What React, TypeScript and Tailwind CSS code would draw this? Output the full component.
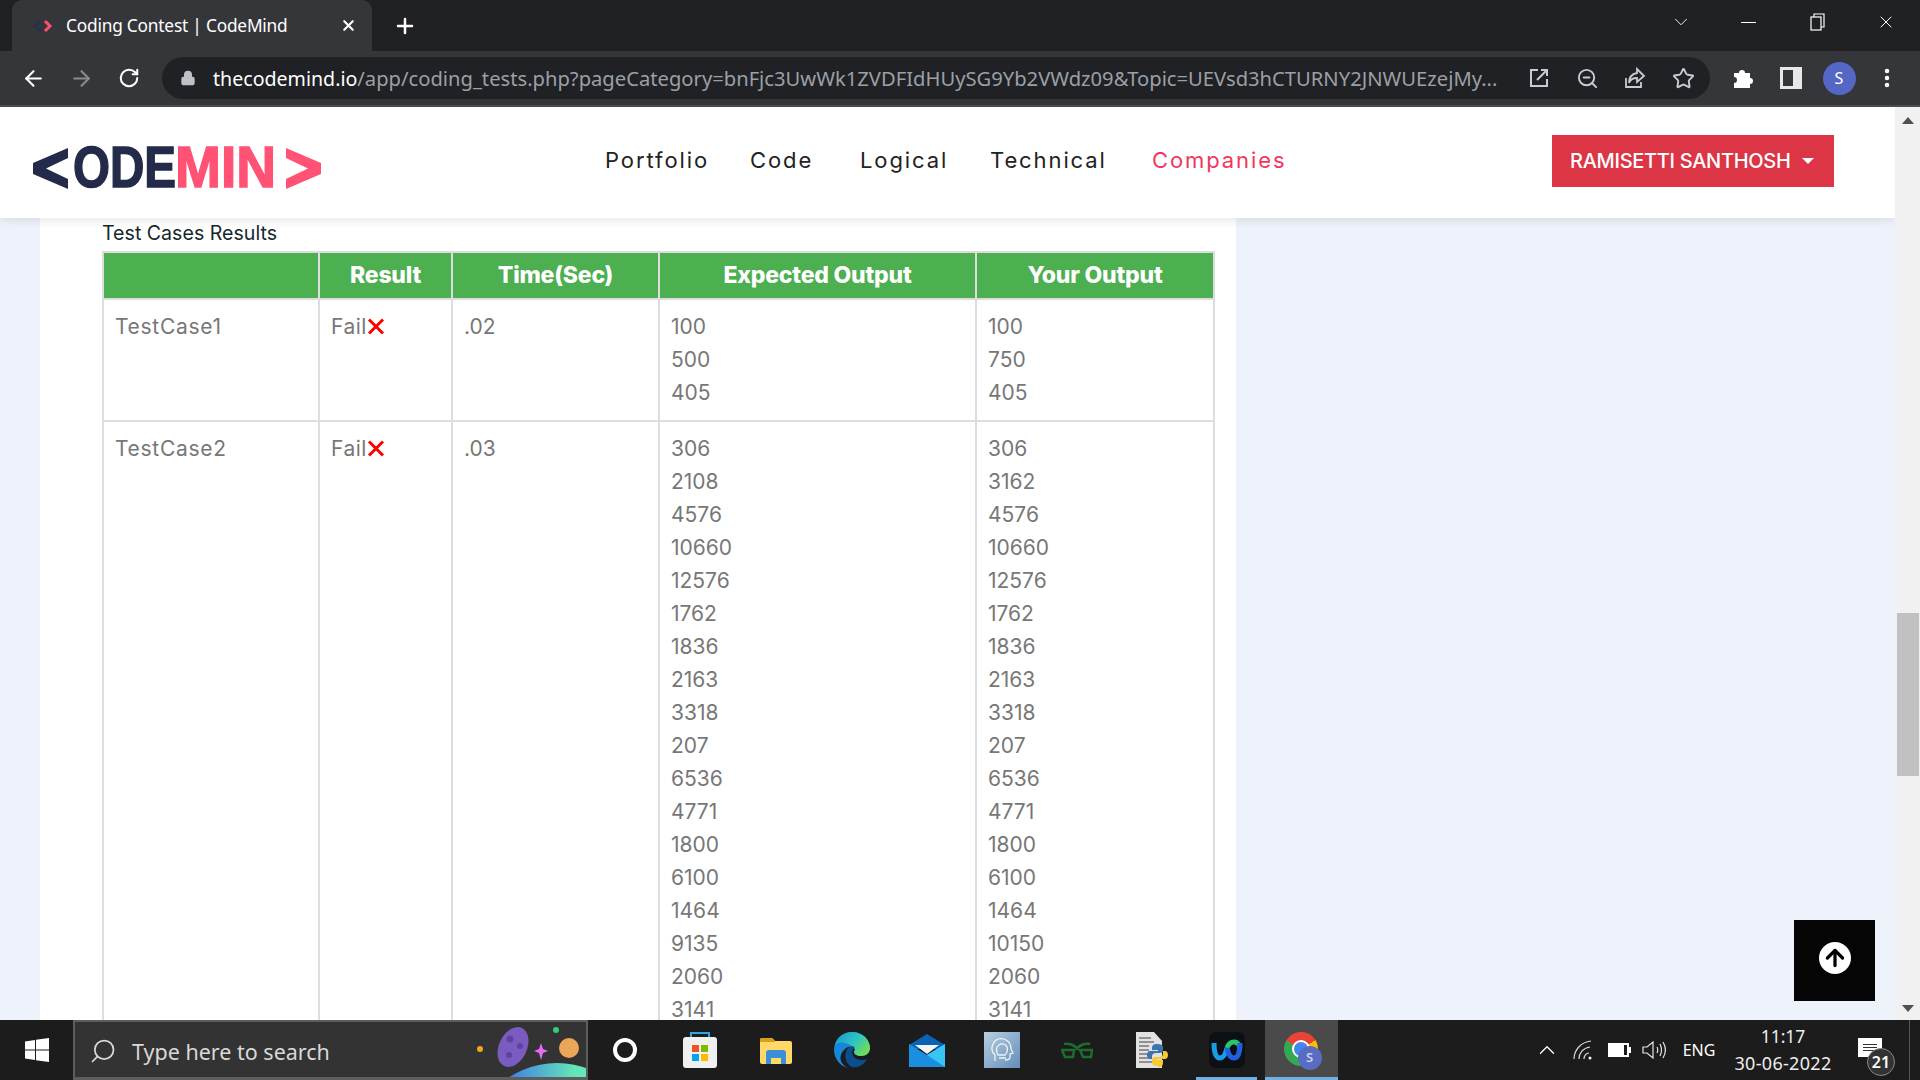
import {
  ArrowLeft,
  ArrowRight,
  ArrowUp,
  ChevronDown,
  ChevronUp,
  Lock,
  MoreVertical,
  Plus,
  RotateCw,
  Search,
  Star,
  X,
  ZoomOut,
} from "lucide-react";

const expected2 = ["306", "2108", "4576", "10660", "12576", "1762", "1836", "2163", "3318", "207", "6536", "4771", "1800", "6100", "1464", "9135", "2060", "3141"];
const actual2 = ["306", "3162", "4576", "10660", "12576", "1762", "1836", "2163", "3318", "207", "6536", "4771", "1800", "6100", "1464", "10150", "2060", "3141"];

const rows = [
  { name: "TestCase1", time: ".02", expected: ["100", "500", "405"], actual: ["100", "750", "405"] },
  { name: "TestCase2", time: ".03", expected: expected2, actual: actual2 },
];

function TabBar() {
  return (
    <div className="flex h-[51px] items-end bg-[#202124] pl-[12px] font-['Noto_Sans',sans-serif] text-white">
      <div className="flex h-[51px] w-[360px] items-center rounded-t-[10px] bg-[#35363a] pl-[20px]">
        <svg width="22" height="14" viewBox="0 0 22 14" className="shrink-0">
          <path d="M8 2 3 7l5 5" fill="none" stroke="#26304f" strokeWidth="3" />
          <path d="M13 2l5 5-5 5" fill="none" stroke="#ff4f70" strokeWidth="3" />
        </svg>
        <span className="ml-[12px] w-[274px] text-[17.3px] tracking-[-0.2px]">Coding Contest | CodeMind</span>
        <X size={17} strokeWidth={3} />
      </div>
      <div className="flex h-[51px] w-[66px] items-center justify-center">
        <Plus size={24} strokeWidth={2.5} />
      </div>
      <div className="ml-auto flex h-[44px] items-center self-start">
        <div className="flex w-[67px] justify-center"><ChevronDown size={22} strokeWidth={1} /></div>
        <div className="flex w-[69px] justify-center"><div className="h-px w-[15px] bg-white" /></div>
        <div className="flex w-[69px] justify-center">
          <svg width="16" height="18" viewBox="0 0 16 18" fill="none" stroke="white" strokeWidth="1.2">
            <rect x="1" y="4" width="10" height="13" />
            <path d="M4 4V1h10v13h-3" />
          </svg>
        </div>
        <div className="flex w-[68px] justify-center"><X size={20} strokeWidth={1.2} /></div>
      </div>
    </div>
  );
}

function ToolbarIcon({ children }: { children: React.ReactNode }) {
  return <div className="flex h-[42px] w-[48px] shrink-0 items-center justify-center">{children}</div>;
}

function Toolbar() {
  return (
    <div className="flex h-[56px] shrink-0 items-start border-b-2 border-[#4b4c4f] bg-[#35363a] pl-[9px] pt-[6px] font-['Noto_Sans',sans-serif] text-white">
      <div className="flex h-[42px] items-center">
        <ToolbarIcon><ArrowLeft size={25} strokeWidth={2} /></ToolbarIcon>
        <ToolbarIcon><ArrowRight size={25} strokeWidth={2} className="text-[#8b8c8f]" /></ToolbarIcon>
        <ToolbarIcon><RotateCw size={22} strokeWidth={2.2} /></ToolbarIcon>
      </div>
      <div className="ml-[9px] flex h-[42px] w-[1548px] items-center rounded-full bg-[#202124] pl-[18px] pr-[3px]">
        <Lock size={16} fill="#bdc1c6" className="shrink-0 text-[#bdc1c6]" />
        <div className="ml-[17px] w-[1284px] whitespace-nowrap text-[19.6px]">
          thecodemind.io
          <span className="text-[20.2px] text-[#9aa0a6]">/app/coding_tests.php?pageCategory=bnFjc3UwWk1ZVDFIdHUySG9Yb2VWdz09&amp;Topic=UEVsd3hCTURNY2JNWUEzejMy...</span>
        </div>
        <div className="ml-auto flex text-[#c8cbcf]">
          <ToolbarIcon>
            <svg width="20" height="20" viewBox="0 0 20 20" fill="none" stroke="currentColor" strokeWidth="2">
              <path d="M9 2H2v16h16v-7M12 2h6v6M18 2 8 12" />
            </svg>
          </ToolbarIcon>
          <ToolbarIcon><ZoomOut size={23} strokeWidth={2} /></ToolbarIcon>
          <ToolbarIcon>
            <svg width="22" height="22" viewBox="0 0 22 22" fill="none" stroke="currentColor" strokeWidth="1.8">
              <path d="M2 11v9h15v-5" />
              <path d="M13 2l7 7-7 6v-4c-4 0-7 2-8 5 0-6 3-9 8-10z" />
            </svg>
          </ToolbarIcon>
          <ToolbarIcon><Star size={23} strokeWidth={2} /></ToolbarIcon>
        </div>
      </div>
      <div className="ml-[9px] flex h-[42px] items-center">
        <ToolbarIcon>
          <svg width="24" height="24" viewBox="0 0 24 24" fill="white">
            <path d="M3 7h5a3 3 0 1 1 6 0h5v5a3 3 0 1 1 0 6v4H3v-5a3 3 0 1 0 0-6z" />
          </svg>
        </ToolbarIcon>
        <ToolbarIcon>
          <div className="flex h-[22px] w-[22px] justify-start border-[3px] border-[#e8e8e8] bg-[#e8e8e8]">
            <div className="h-full w-[10px] bg-[#35363a]" />
          </div>
        </ToolbarIcon>
        <ToolbarIcon>
          <div className="flex h-[33px] w-[33px] items-center justify-center rounded-full bg-[#5567c4] text-[16px]">S</div>
        </ToolbarIcon>
        <ToolbarIcon><MoreVertical size={24} strokeWidth={2.5} /></ToolbarIcon>
      </div>
    </div>
  );
}

function Logo() {
  return (
    <div className="mt-[12px] flex h-[42px] w-[288px] items-center font-['Liberation_Sans',sans-serif] text-[58px] font-bold leading-[42px]">
      <svg width="35" height="41" viewBox="0 0 35 41" className="shrink-0">
        <path d="M35 0v10L13 20.500 35 31v10L0 26V15z" fill="#232a4a" />
      </svg>
      <div className="ml-[5px] w-[102px] text-[#232a4a] [-webkit-text-stroke:1.5px_#232a4a]">
        <span className="inline-block origin-left -translate-y-[2px] scale-x-[0.82]">ODE</span>
      </div>
      <div className="w-[102px] text-[#ff5274] [-webkit-text-stroke:1.5px_#ff5274]">
        <span className="inline-block origin-left -translate-y-[2px] scale-x-[0.95]">MIN</span>
      </div>
      <svg width="35" height="41" viewBox="0 0 35 41" className="ml-[9px] shrink-0">
        <path d="M0 0v10l22 10.500L0 31v10l35-15V15z" fill="#ff5274" />
      </svg>
    </div>
  );
}

function SiteHeader() {
  const links = [
    { label: "Portfolio", w: "w-[145px]" },
    { label: "Code", w: "w-[110px]" },
    { label: "Logical", w: "w-[130px]" },
    { label: "Technical", w: "w-[162px]" },
  ];
  return (
    <div className="relative z-10 flex h-[111px] shrink-0 items-center bg-white pl-[33px] shadow-[0_2px_10px_rgba(0,0,0,0.1)]">
      <Logo />
      <nav className="ml-[284px] flex -translate-y-[2px] items-center font-['Inter',sans-serif] text-[22px] tracking-[1.9px] text-[#222]">
        {links.map((l) => (
          <span key={l.label} className={l.w}>{l.label}</span>
        ))}
        <span className="text-[#f5365c]">Companies</span>
      </nav>
      <div className="ml-auto mr-[61px] flex h-[52px] w-[282px] -translate-y-[2px] items-center bg-[#dc3545] pl-[18px] font-['Inter',sans-serif] text-[20px] font-medium tracking-[-0.3px] text-white">
        RAMISETTI SANTHOSH
        <span className="ml-[11px] h-0 w-0 border-x-[6px] border-t-[6px] border-x-transparent border-t-white" />
      </div>
    </div>
  );
}

function FailMark() {
  return (
    <svg width="18" height="17" viewBox="0 0 18 17" className="inline-block align-[-1px]">
      <path d="M2 1.500l14 14M16 1.500l-14 14" stroke="#f00" strokeWidth="3" fill="none" />
    </svg>
  );
}

function Lines({ items }: { items: string[] }) {
  return (
    <>
      {items.map((v, i) => (
        <div key={i}>{v}</div>
      ))}
    </>
  );
}

function ResultsTable() {
  const th = "border-2 border-[#ddd] py-[6px] text-center text-[23px] font-extrabold leading-[33px] tracking-[-0.2px] text-white";
  const td = "border-2 border-[#ddd] pb-[11px] pl-[11px] pr-[10px] pt-[10px] align-top";
  return (
    <table className="w-[1111px] table-fixed border-collapse font-['Inter',sans-serif] text-[21px] leading-[33px] text-[#777]">
      <colgroup>
        <col className="w-[216px]" />
        <col className="w-[133px]" />
        <col className="w-[207px]" />
        <col className="w-[317px]" />
        <col className="w-[238px]" />
      </colgroup>
      <thead>
        <tr className="bg-[#4caf50]">
          <th className={th}></th>
          <th className={th}>Result</th>
          <th className={th}>Time(Sec)</th>
          <th className={th}>Expected Output</th>
          <th className={th}>Your Output</th>
        </tr>
      </thead>
      <tbody>
        {rows.map((r) => (
          <tr key={r.name}>
            <td className={`${td} tracking-[0.7px]`}>{r.name}</td>
            <td className={`${td} tracking-[0.5px]`}>Fail<FailMark /></td>
            <td className={td}>{r.time}</td>
            <td className={td}><Lines items={r.expected} /></td>
            <td className={td}><Lines items={r.actual} /></td>
          </tr>
        ))}
      </tbody>
    </table>
  );
}

function Page() {
  return (
    <div className="relative flex min-h-0 flex-1 overflow-hidden">
      <div className="flex min-w-0 flex-1 flex-col overflow-hidden bg-[#eef2fb]">
        <SiteHeader />
        <div className="ml-[40px] w-[1196px] flex-1 bg-white pl-[62px] pt-[3px]">
          <div className="mb-[6px] font-['Inter',sans-serif] text-[19.6px] leading-[24px] text-[#14282b]">
            Test Cases Results
          </div>
          <ResultsTable />
        </div>
      </div>
      <div className="flex w-[25px] shrink-0 flex-col items-center bg-[#f1f1f1] pt-[10px]">
        <span className="h-0 w-0 border-x-[6px] border-b-[7px] border-x-transparent border-b-[#505050]" />
        <div className="mt-[489px] h-[163px] w-[22px] bg-[#c1c1c1]" />
        <span className="mt-[229px] h-0 w-0 border-x-[6px] border-t-[7px] border-x-transparent border-t-[#505050]" />
      </div>
      <div className="absolute left-[1794px] top-[813px] flex h-[81px] w-[81px] items-center justify-center bg-[#050505]">
        <div className="flex h-[32px] w-[32px] -translate-y-[3px] items-center justify-center rounded-full bg-white">
          <ArrowUp size={26} strokeWidth={3} className="text-black" />
        </div>
      </div>
    </div>
  );
}

function Art() {
  return (
    <svg width="110" height="57" viewBox="0 0 110 57" className="absolute bottom-0 right-0">
      <defs>
        <linearGradient id="globe" x1="0" x2="1" y1="0" y2="0">
          <stop offset="0.2" stopColor="#3f78ea" />
          <stop offset="0.6" stopColor="#63e6b6" />
          <stop offset="1" stopColor="#7bf0c0" />
        </linearGradient>
      </defs>
      <circle cx="4" cy="29" r="3" fill="#f2a81d" />
      <ellipse cx="37" cy="27" rx="14" ry="21" transform="rotate(25 37 27)" fill="#7a5cc0" />
      <circle cx="34" cy="19" r="3.500" fill="#5e449f" />
      <circle cx="44" cy="26" r="3" fill="#5e449f" />
      <circle cx="33" cy="35" r="3" fill="#5e449f" />
      <path d="M65 23l2 6 5 2-5 2-2 7-2-7-5-2 5-2z" fill="#e56bf0" />
      <circle cx="80" cy="10" r="3" fill="#2fce79" />
      <circle cx="93" cy="28" r="10" fill="#eaa75a" />
      <circle cx="81" cy="131" r="88" fill="url(#globe)" />
    </svg>
  );
}

function TaskIcon({ w, children }: { w: string; children: React.ReactNode }) {
  return <div className={`flex items-center justify-center ${w}`}>{children}</div>;
}

function Taskbar() {
  return (
    <div className="flex h-[60px] shrink-0 items-stretch bg-[#1c1c1c] font-['Noto_Sans',sans-serif] text-white">
      <div className="flex w-[73px] items-center justify-center">
        <svg width="24" height="24" viewBox="0 0 24 24" fill="white">
          <path d="M0 3.500 10 2v9.500H0zM11 1.800 24 0v11.500H11zM0 12.500h10V22L0 20.500zM11 12.500h13V24l-13-1.800z" />
        </svg>
      </div>
      <div className="relative flex w-[515px] items-center border-2 border-b-[3px] border-[#5d5d5d] bg-[#333] pl-[14px] pt-[2px] text-[#d9d9d9]">
        <Search size={28} strokeWidth={1.5} className="-scale-x-100" />
        <span className="ml-[15px] translate-y-[2px] text-[21.5px]">Type here to search</span>
        <Art />
      </div>
      <TaskIcon w="w-[74px]">
        <div className="h-[24px] w-[24px] rounded-full border-[4px] border-white" />
      </TaskIcon>
      <TaskIcon w="w-[76px]">
        <svg width="36" height="36" viewBox="0 0 36 36">
          <path d="M9 6V1h18v5" fill="none" stroke="#27a9e0" strokeWidth="2" />
          <rect x="1" y="5" width="34" height="31" rx="3" fill="#f0f0f0" />
          <rect x="10" y="13" width="7" height="7" fill="#f25022" />
          <rect x="19" y="13" width="7" height="7" fill="#7fba00" />
          <rect x="10" y="22" width="7" height="7" fill="#00a4ef" />
          <rect x="19" y="22" width="7" height="7" fill="#ffb900" />
        </svg>
      </TaskIcon>
      <TaskIcon w="w-[76px]">
        <svg width="32" height="27" viewBox="0 0 32 27">
          <path d="M0 3a2 2 0 0 1 2-2h10l3 3h15a2 2 0 0 1 2 2v19a2 2 0 0 1-2 2H2a2 2 0 0 1-2-2z" fill="#ffd868" />
          <path d="M0 3a2 2 0 0 1 2-2h10l3 3 0 1H0z" fill="#d9a015" />
          <path d="M6 27V16a3 3 0 0 1 3-3h14a3 3 0 0 1 3 3v11h-5v-6H11v6z" fill="#3a90d8" />
        </svg>
      </TaskIcon>
      <TaskIcon w="w-[75px]">
        <svg width="36" height="36" viewBox="0 0 36 36">
          <defs>
            <linearGradient id="edgeTop" x1="0" x2="1" y1="0" y2="0.600">
              <stop offset="0" stopColor="#1593d8" />
              <stop offset="0.6" stopColor="#2fc6c0" />
              <stop offset="1" stopColor="#6fdc5a" />
            </linearGradient>
          </defs>
          <path d="M0 18C0 8 8 0 18 0c11 0 18 8 18 16 0 5-4 8-9 8-4 0-7-2-7-4 0-1 1-2 1-3-3-3-8-3-11 1-3 3-5 8-2 13 2 3 5 5 8 5C8 36 0 28 0 18z" fill="#1687d8" />
          <path d="M1 13C3 5 10 0 18 0c11 0 18 8 18 16 0 5-4 8-9 8-4 0-7-2-7-4 0-1 1-2 1-3-5-6-15-9-20-4z" fill="url(#edgeTop)" />
          <path d="M12 20c1-5 6-7 9-5-3 2-4 6-1 10 3 3 8 4 13 2-3 6-9 9-15 8-5-2-8-9-6-15z" fill="#0c4f8f" />
        </svg>
      </TaskIcon>
      <TaskIcon w="w-[75px]">
        <svg width="36" height="33" viewBox="0 0 36 33">
          <path d="M18 0 36 11v4H0v-4z" fill="#0a62b5" />
          <path d="M6 11h24l-12 9z" fill="#f2f5f8" />
          <path d="M0 10l18 11 18-11v23H0z" fill="#1a8fe0" />
          <path d="M36 10v23L18 21z" fill="#39c5f3" />
        </svg>
      </TaskIcon>
      <TaskIcon w="w-[75px]">
        <svg width="36" height="36" viewBox="0 0 36 36">
          <defs>
            <linearGradient id="contact" x1="0" x2="1" y1="0" y2="1">
              <stop offset="0" stopColor="#b7cfe2" />
              <stop offset="1" stopColor="#648db8" />
            </linearGradient>
          </defs>
          <rect width="36" height="36" fill="url(#contact)" />
          <path d="M11 29v-6c-3-3-4-7-2-11 2-5 8-7 13-4 4 2 5 6 5 9l2 4-3 1v3c0 2-2 3-5 3M14 23c-2-4-2-8 1-10 3-2 7-1 8 2 1 3 0 6-2 8zM15 26h7" fill="none" stroke="#eef4f9" strokeWidth="1.300" />
        </svg>
      </TaskIcon>
      <TaskIcon w="w-[75px]">
        <svg width="32" height="17" viewBox="0 0 32 17" fill="none" stroke="#1b6d2e" strokeWidth="2.500">
          <path d="M1 8h12l-1 7H4zM19 8h12l-1 7h-8z" />
          <path d="M3 2c6-1 9 1 13 4 4-3 7-5 13-4M13 8l3-2 3 2" />
        </svg>
      </TaskIcon>
      <TaskIcon w="w-[76px]">
        <svg width="34" height="36" viewBox="0 0 34 36">
          <path d="M1 0h18l8 9v27H1z" fill="#e2e2e2" />
          <path d="M4 6h12M4 10h15M4 14h10M4 18h10M4 22h10M4 26h10M4 30h16" stroke="#777" strokeWidth="1.500" />
          <path d="M22 12c-4 0-5 2-5 4v2h6v1h-8c-2 0-3 2-3 4s1 4 3 4h2v-3c0-2 2-3 4-3h4c2 0 3-1 3-3v-3c0-2-2-3-6-3z" fill="#3a75b0" />
          <path d="M23 35c4 0 5-2 5-4v-3h-6v-1h8c2 0 3-2 3-4s-1-4-3-4h-2v3c0 2-2 3-4 3h-4c-2 0-3 1-3 3v3c0 2 2 3 6 3z" fill="#f6c935" />
        </svg>
      </TaskIcon>
      <div className="relative flex w-[75px] items-center justify-center">
        <div className="flex h-[36px] w-[36px] -translate-x-[1px] items-center justify-center rounded-[7px] bg-[#0c0f14]">
          <svg width="32" height="22" viewBox="0 0 32 22" fill="none" strokeWidth="5">
            <path d="M3 4c0 10 2 15 6 15s6-6 7-10" stroke="#1a9be8" />
            <path d="M16 9c1-3 3-6 7-6 5 0 6 6 6 6" stroke="#27c46a" />
            <path d="M16 9c1 5 3 10 7 10s6-6 6-15" stroke="#1f5fe0" />
          </svg>
        </div>
        <div className="absolute bottom-0 left-[6px] h-[3px] w-[61px] bg-[#6cb2e8]" />
      </div>
      <div className="relative flex w-[73px] items-center justify-center bg-[#4a4a4a]">
        <div className="relative -translate-x-[1px] -translate-y-[1px] h-[34px] w-[34px] rounded-full bg-[conic-gradient(from_300deg,#ea4335_0_33%,#fbbc04_33%_66%,#34a853_66%)]">
          <div className="absolute left-[10px] top-[10px] h-[14px] w-[14px] rounded-full bg-[#4285f4] outline-2 outline-white" />
          <div className="absolute left-[14px] top-[14px] flex h-[24px] w-[24px] items-center justify-center rounded-full bg-[#5a6bc2] text-[13px] font-semibold text-[#cdd3f0]">S</div>
        </div>
        <div className="absolute bottom-0 left-0 h-[3px] w-full bg-[#6cb2e8]" />
      </div>
      <div className="ml-[192px] flex items-stretch">
        <div className="flex w-[34px] items-center justify-center"><ChevronUp size={26} strokeWidth={1.2} /></div>
        <div className="flex w-[38px] items-center justify-center">
          <svg width="20" height="20" viewBox="0 0 20 20" fill="none" stroke="#ddd" strokeWidth="1.200">
            <path d="M1 19C1 10 8 2 18 1M6 19c0-6 4-11 11-12M11 19c0-3 2-6 5-6" />
            <circle cx="17" cy="18" r="1.500" fill="#fff" stroke="none" />
          </svg>
        </div>
        <div className="flex w-[34px] items-center justify-center">
          <div className="h-[14px] w-[21px] border-2 border-white bg-[linear-gradient(90deg,white_85%,transparent_85%)]" />
          <div className="h-[6px] w-[2px] bg-white" />
        </div>
        <div className="flex w-[36px] items-center justify-center">
          <svg width="24" height="20" viewBox="0 0 24 20" fill="none" stroke="#e6e6e6" strokeWidth="1.200">
            <path d="M1 7h4l6-5v16l-6-5H1zM15 7c1 2 1 4 0 6M18 4c2 4 2 8 0 12M21 2c3 5 3 11 0 16" />
          </svg>
        </div>
        <div className="flex w-[54px] items-center justify-center text-[16px]">ENG</div>
        <div className="flex w-[114px] flex-col items-center justify-center text-[17.5px] leading-[27px] text-[#eee]">
          <div>11:17</div>
          <div className="text-[18px] tracking-[0.3px]">30-06-2022</div>
        </div>
        <div className="relative w-[70px] border-r border-[#555]">
          <div className="absolute left-[18px] top-[18px] flex h-[19px] w-[24px] flex-col items-center justify-center gap-[2px] bg-white">
            <div className="h-px w-[14px] bg-[#333]" />
            <div className="h-px w-[14px] bg-[#333]" />
            <div className="h-px w-[14px] bg-[#333]" />
          </div>
          <div className="absolute left-[27px] top-[28px] flex h-[28px] w-[28px] items-center justify-center rounded-full border border-[#888] bg-[#333] text-[16px] font-semibold">21</div>
        </div>
      </div>
    </div>
  );
}

export default function App() {
  return (
    <div className="flex h-[1080px] w-[1920px] flex-col overflow-hidden">
      <TabBar />
      <Toolbar />
      <Page />
      <Taskbar />
    </div>
  );
}
